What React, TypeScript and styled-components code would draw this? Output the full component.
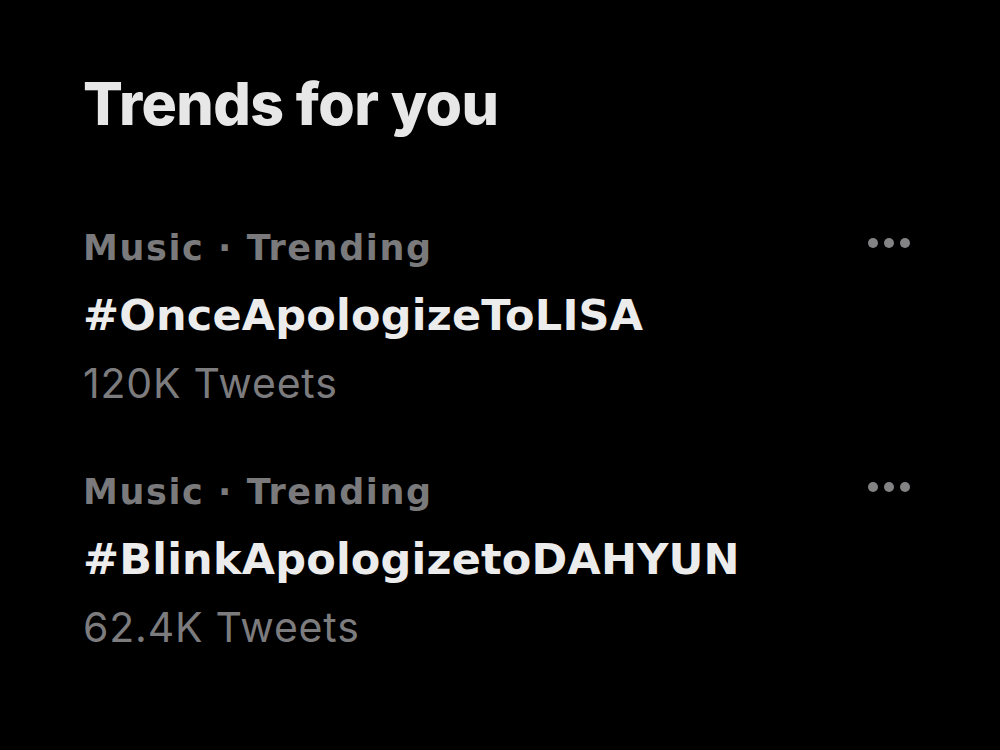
import React from "react";
import styled, { createGlobalStyle } from "styled-components";

const Global = createGlobalStyle`
  html, body {
    margin: 0;
    padding: 0;
    background: #000;
  }
  body {
    font-family: Inter, "Liberation Sans", Arial, sans-serif;
    -webkit-font-smoothing: antialiased;
  }
`;

const Page = styled.div`
  width: 1000px;
  height: 750px;
  background: #000;
  box-sizing: border-box;
  padding: 69px 90px 0 83px;
  display: flex;
  flex-direction: column;
  overflow: hidden;
`;

const Title = styled.h2`
  margin: 0 0 89px;
  font-size: 59px;
  line-height: 70px;
  font-weight: 800;
  letter-spacing: -0.6px;
  color: #e7e7e7;
`;

const List = styled.div`
  display: flex;
  flex-direction: column;
  gap: 66px;
`;

const Item = styled.div`
  display: grid;
  grid-template-columns: 1fr auto;
  align-items: start;
`;

const Meta = styled.div`
  display: flex;
  flex-direction: column;
`;

const Category = styled.div`
  font-family: "DejaVu Sans", Inter, sans-serif;
  font-size: 35px;
  line-height: 40px;
  font-weight: 700;
  letter-spacing: 1.6px;
  color: #7a7a7c;
`;

const Tag = styled.div`
  margin-top: 22px;
  font-family: "DejaVu Sans", Inter, sans-serif;
  font-size: 43px;
  line-height: 50px;
  font-weight: 700;
  letter-spacing: 0.2px;
  color: #ececec;
`;

const Count = styled.div`
  margin-top: 20px;
  font-size: 41px;
  line-height: 46px;
  font-weight: 400;
  letter-spacing: 0.8px;
  color: #7c7c7e;
`;

const More = styled.div`
  display: flex;
  gap: 6px;
  padding-top: 10px;
`;

const Dot = styled.span`
  width: 10px;
  height: 10px;
  border-radius: 50%;
  background: #838385;
`;

const trends = [
  { category: "Music · Trending", tag: "#OnceApologizeToLISA", count: "120K Tweets" },
  { category: "Music · Trending", tag: "#BlinkApologizetoDAHYUN", count: "62.4K Tweets" },
];

export default function App() {
  return (
    <>
      <Global />
      <Page>
        <Title>Trends for you</Title>
        <List>
          {trends.map((t) => (
            <Item key={t.tag}>
              <Meta>
                <Category>{t.category}</Category>
                <Tag>{t.tag}</Tag>
                <Count>{t.count}</Count>
              </Meta>
              <More>
                <Dot />
                <Dot />
                <Dot />
              </More>
            </Item>
          ))}
        </List>
      </Page>
    </>
  );
}
